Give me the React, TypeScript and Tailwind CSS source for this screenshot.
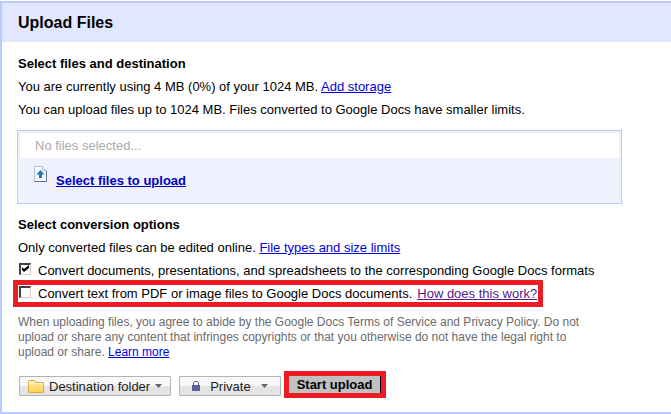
import { useState } from 'react';

const linkClass = 'text-[#0000e0] underline';

const options = [
  {
    id: 'convert-docs',
    label: 'Convert documents, presentations, and spreadsheets to the corresponding Google Docs formats',
    checked: true,
    highlighted: false,
  },
  {
    id: 'convert-text',
    label: 'Convert text from PDF or image files to Google Docs documents.',
    checked: false,
    highlighted: true,
    help: 'How does this work?',
  },
];

function UploadIcon() {
  return (
    <svg width="13" height="16" viewBox="0 0 13 16" aria-hidden="true">
      <path d="M.5.5h8l4 4v11H.5z" fill="#f8fbff" stroke="#b4c0da" />
      <path d="M12.5 4.5v11H.5" fill="none" stroke="#5b7299" />
      <path d="M8.5.5v4h4" fill="#dfe7f5" stroke="#b4c0da" />
      <path d="M6.5 4L10.5 8.5H8V12H5V8.5H2.5z" fill="#2277b8" />
    </svg>
  );
}

function FolderIcon() {
  return (
    <svg width="16" height="13" viewBox="0 0 16 13" aria-hidden="true">
      <defs>
        <linearGradient id="folder" x1="0" y1="0" x2="0" y2="1">
          <stop offset="0" stopColor="#fff0a8" />
          <stop offset="1" stopColor="#ffd04f" />
        </linearGradient>
      </defs>
      <path d="M.5 12.5V1.5l1-1h5l1 1v1h8v10z" fill="url(#folder)" stroke="#dba850" />
      <path d="M1 3.5h14" stroke="#fff7cf" />
    </svg>
  );
}

function LockIcon() {
  return (
    <svg width="8" height="10" viewBox="0 0 8 10" aria-hidden="true">
      <path d="M1.5 5V2l1-1.5h3l1 1.5v3" fill="none" stroke="#5a5f96" />
      <path d="M0 4h8v6H0z" fill="#5a5f96" />
    </svg>
  );
}

function Caret() {
  return (
    <svg width="7" height="4" viewBox="0 0 7 4" aria-hidden="true">
      <path d="M0 0h7L3.5 4z" fill="#666" />
    </svg>
  );
}

const menuButton =
  'flex h-5 items-center rounded-[1px] border border-[#b3b3b3] bg-linear-to-b from-[#f8f8f8] from-50% to-[#e4e4e4] to-50% text-[#222]';

export default function App() {
  const [checked, setChecked] = useState<Record<string, boolean>>(
    Object.fromEntries(options.map((o) => [o.id, o.checked])),
  );

  return (
    <main className="mt-px border-2 border-r-0 border-[#b9cbfb] bg-white font-['Liberation_Sans',Arial,sans-serif] text-[13px] leading-[23px] text-black">
      <header className="bg-[#e1e7fe] px-4 py-2">
        <h1 className="text-base leading-[23px] font-bold">Upload Files</h1>
      </header>

      <div className="px-4 pt-[10px] pb-4">
        <section>
          <h2 className="font-bold">Select files and destination</h2>
          <p>
            You are currently using 4 MB (0%) of your 1024 MB.{' '}
            <a href="#storage" className={linkClass}>Add storage</a>
          </p>
          <p>You can upload files up to 1024 MB. Files converted to Google Docs have smaller limits.</p>

          <div className="mt-[9px] mr-[33px] -ml-px border border-[#b9cbfb] bg-[#eff2fe] p-[2px]">
            <p className="bg-white px-[15px] py-px text-[#aaa]">No files selected...</p>
            <div className="flex items-start gap-[9px] px-[14px] pt-2 pb-[9px]">
              <UploadIcon />
              <a href="#select" className="mt-[3px] font-bold text-[#0000c0] underline">
                Select files to upload
              </a>
            </div>
          </div>
        </section>

        <section className="mt-[9px]">
          <h2 className="font-bold">Select conversion options</h2>
          <p>
            Only converted files can be edited online.{' '}
            <a href="#types" className={linkClass}>File types and size limits</a>
          </p>
          {options.map((o) => (
            <div
              key={o.id}
              className={
                o.highlighted
                  ? 'my-[3px] flex h-[17px] w-fit items-center pr-px outline-5 outline-[#ed1c24]'
                  : 'flex w-fit items-center'
              }
            >
              <span className="relative mr-[7px] mb-[3px] ml-px size-3">
                <input
                  id={o.id}
                  type="checkbox"
                  checked={checked[o.id]}
                  onChange={(e) => setChecked({ ...checked, [o.id]: e.target.checked })}
                  className="peer block size-3 appearance-none border border-t-2 border-l-2 border-[#d4d0c8] border-t-[#404040] border-l-[#404040] bg-white"
                />
                <svg
                  viewBox="0 0 12 12"
                  className="pointer-events-none absolute inset-0 hidden size-3 peer-checked:block"
                  aria-hidden="true"
                >
                  <path d="M3 4v3l2 2 5-4V2L5 6z" fill="#000" />
                </svg>
              </span>
              <label htmlFor={o.id}>{o.label}</label>
              {o.help && (
                <a href="#help" className="ml-[5px] text-[#551a8b] underline">{o.help}</a>
              )}
            </div>
          ))}
        </section>

        <p className="mt-[13px] mr-16 text-xs leading-[15px] text-[#6b6b6b]">
          When uploading files, you agree to abide by the Google Docs Terms of Service and Privacy Policy. Do not
          upload or share any content that infringes copyrights or that you otherwise do not have the legal right to
          upload or share. <a href="#more" className={linkClass}>Learn more</a>
        </p>

        <div className="mt-4 ml-px flex items-start gap-2">
          <button type="button" className={`${menuButton} gap-[5px] px-2`}>
            <FolderIcon />
            Destination folder
            <Caret />
          </button>
          <button type="button" className={`${menuButton} gap-[10px] px-3`}>
            <LockIcon />
            Private
            <Caret />
          </button>
          <button
            type="button"
            className="h-[17px] border-r border-black bg-[#c0c0c0] px-2 leading-[17px] font-bold outline-5 outline-[#ed1c24]"
          >
            Start upload
          </button>
        </div>
      </div>
    </main>
  );
}
